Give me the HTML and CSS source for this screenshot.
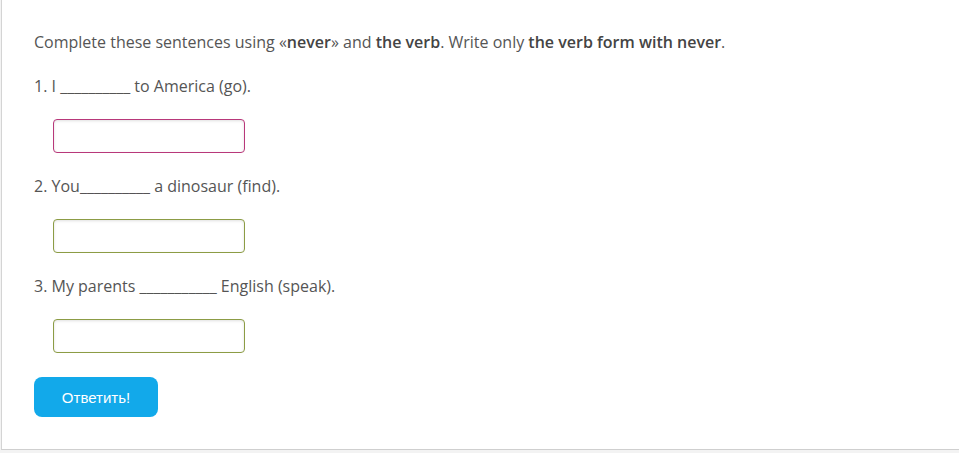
FILE: index.html
```html
<!DOCTYPE html>
<html lang="ru">
<head>
    <meta charset="UTF-8">
    <meta name="viewport" content="width=device-width, initial-scale=1.0">
    <title>Упражнение</title>
    <link rel="stylesheet" href="styles.css">
</head>
<body>

    <div class="task">
        <p class="task-text">Complete these sentences using «<b>never</b>» and <b>the verb</b>. Write only <b>the verb form with never</b>.</p>

        <div class="question">
            <p class="task-text">1. I __________ to America (go).</p>
            <input type="text" class="answer answer-wrong">
        </div>

        <div class="question">
            <p class="task-text">2. You__________ a dinosaur (find).</p>
            <input type="text" class="answer answer-ok">
        </div>

        <div class="question">
            <p class="task-text">3. My parents ___________ English (speak).</p>
            <input type="text" class="answer answer-ok">
        </div>

        <button type="button" class="button">Ответить!</button>
    </div>

</body>
</html>
```

FILE: styles.css
```css
body {
    margin: 0;
    padding: 0;
    background-color: #f3f3f3;
    font-family: "Open Sans", Arial, sans-serif;
}
.task {
    margin-left: 1px;
    padding: 31px 0 32px 32px;
    background-color: #fff;
    border-left: 1px solid #d4d4d4;
    border-bottom: 1px solid #cfcfcf;
    display: flex;
    flex-direction: column;
    align-items: flex-start;
    gap: 22px;
}
.task-text {
    margin: 0;
    font-size: 16px;
    line-height: 22px;
    color: #555;
}
.task-text b {
    font-weight: 600;
    color: #444;
}
.question {
    display: flex;
    flex-direction: column;
    align-items: flex-start;
    gap: 22px;
}
.answer {
    box-sizing: border-box;
    width: 192px;
    height: 34px;
    margin-left: 19px;
    border-radius: 4px;
    border: 1px solid #999;
    background-color: #fff;
    box-shadow: inset 0 1px 3px rgba(0, 0, 0, 0.12);
    outline: none;
}
.answer-wrong {
    border-color: #b8387a;
}
.answer-ok {
    border-color: #8c9c45;
}
.button {
    margin-top: 2px;
    width: 124px;
    height: 40px;
    border: none;
    border-radius: 8px;
    background-color: #12a9ea;
    color: #fff;
    font-family: Arial, "Liberation Sans", sans-serif;
    font-size: 15px;
    cursor: pointer;
}
```
